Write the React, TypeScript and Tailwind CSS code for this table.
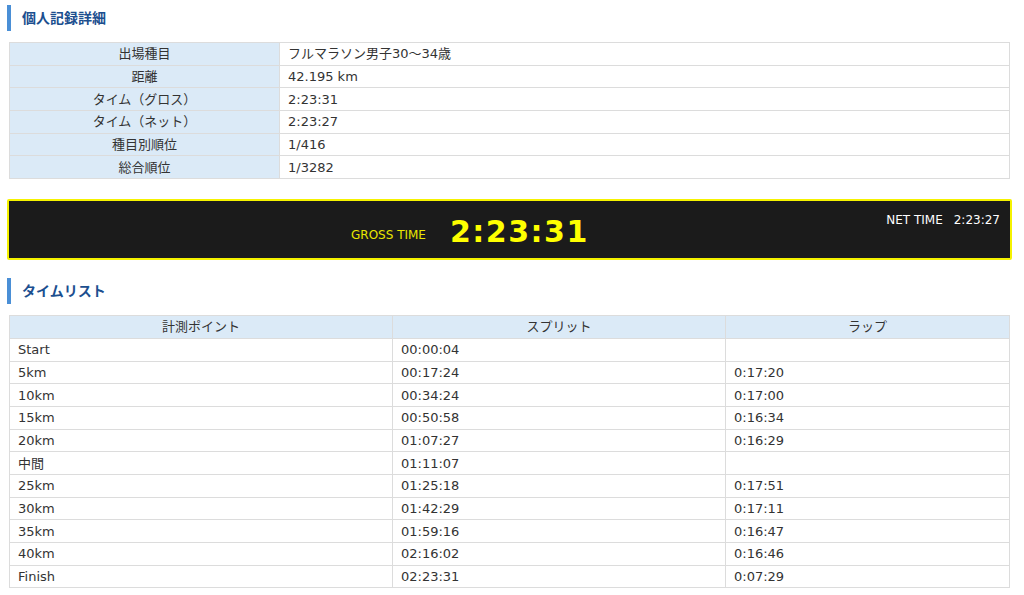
const info = [
  ["出場種目", "フルマラソン男子30〜34歳"],
  ["距離", "42.195 km"],
  ["タイム（グロス）", "2:23:31"],
  ["タイム（ネット）", "2:23:27"],
  ["種目別順位", "1/416"],
  ["総合順位", "1/3282"],
];

const laps = [
  ["Start", "00:00:04", ""],
  ["5km", "00:17:24", "0:17:20"],
  ["10km", "00:34:24", "0:17:00"],
  ["15km", "00:50:58", "0:16:34"],
  ["20km", "01:07:27", "0:16:29"],
  ["中間", "01:11:07", ""],
  ["25km", "01:25:18", "0:17:51"],
  ["30km", "01:42:29", "0:17:11"],
  ["35km", "01:59:16", "0:16:47"],
  ["40km", "02:16:02", "0:16:46"],
  ["Finish", "02:23:31", "0:07:29"],
];

function Heading({ children }: { children: React.ReactNode }) {
  return (
    <div className="flex items-center h-[26px] border-l-4 border-[#4a8fd6] pl-[11px]">
      <h2 className="text-[14px] font-bold text-[#1c4f8f]">{children}</h2>
    </div>
  );
}

export default function App() {
  return (
    <div
      className="bg-white text-[#333] text-[13px] pl-[7px] pr-[12px] pt-[5px]"
      style={{ fontFamily: '"DejaVu Sans", "Noto Sans CJK JP", sans-serif' }}
    >
      <Heading>個人記録詳細</Heading>

      <table className="mt-[11px] ml-[2px] w-[1001px] border-collapse">
        <tbody>
          {info.map(([k, v]) => (
            <tr key={k} className="h-[22.7px]">
              <td className="w-[270px] bg-[#dbeaf7] border border-[#dcdcdc] text-center p-0 leading-none">{k}</td>
              <td className="border border-[#dcdcdc] px-[8px] p-0 leading-none">{v}</td>
            </tr>
          ))}
        </tbody>
      </table>

      <div className="mt-[20px] h-[61px] border-2 border-[#f5f200] rounded-[2px] bg-[#1b1b1b] flex">
        <div className="ml-[342px] flex items-end gap-[24px] pb-[11px]">
          <span className="text-[12px] text-[#e8e600] mb-[3px]">GROSS TIME</span>
          <span className="text-[30px] leading-none font-bold tracking-[1.5px] text-[#ffff00]">2:23:31</span>
        </div>
        <div className="ml-auto mr-[10px] mt-[10px] text-[12px] text-white flex gap-[11px] self-start">
          <span>NET TIME</span>
          <span>2:23:27</span>
        </div>
      </div>

      <div className="mt-[18px]">
        <Heading>タイムリスト</Heading>
      </div>

      <table className="mt-[11px] ml-[2px] w-[1001px] border-collapse">
        <thead>
          <tr className="h-[22.7px] bg-[#dbeaf7]">
            <th className="w-[383px] border border-[#dcdcdc] font-normal p-0 leading-none">計測ポイント</th>
            <th className="w-[333px] border border-[#dcdcdc] font-normal p-0 leading-none">スプリット</th>
            <th className="border border-[#dcdcdc] font-normal p-0 leading-none">ラップ</th>
          </tr>
        </thead>
        <tbody>
          {laps.map(([p, s, l]) => (
            <tr key={p} className="h-[22.7px]">
              <td className="border border-[#dcdcdc] px-[8px] py-0 leading-none">{p}</td>
              <td className="border border-[#dcdcdc] px-[8px] py-0 leading-none">{s}</td>
              <td className="border border-[#dcdcdc] px-[8px] py-0 leading-none">{l}</td>
            </tr>
          ))}
        </tbody>
      </table>
      <div className="h-[8px]" />
    </div>
  );
}
